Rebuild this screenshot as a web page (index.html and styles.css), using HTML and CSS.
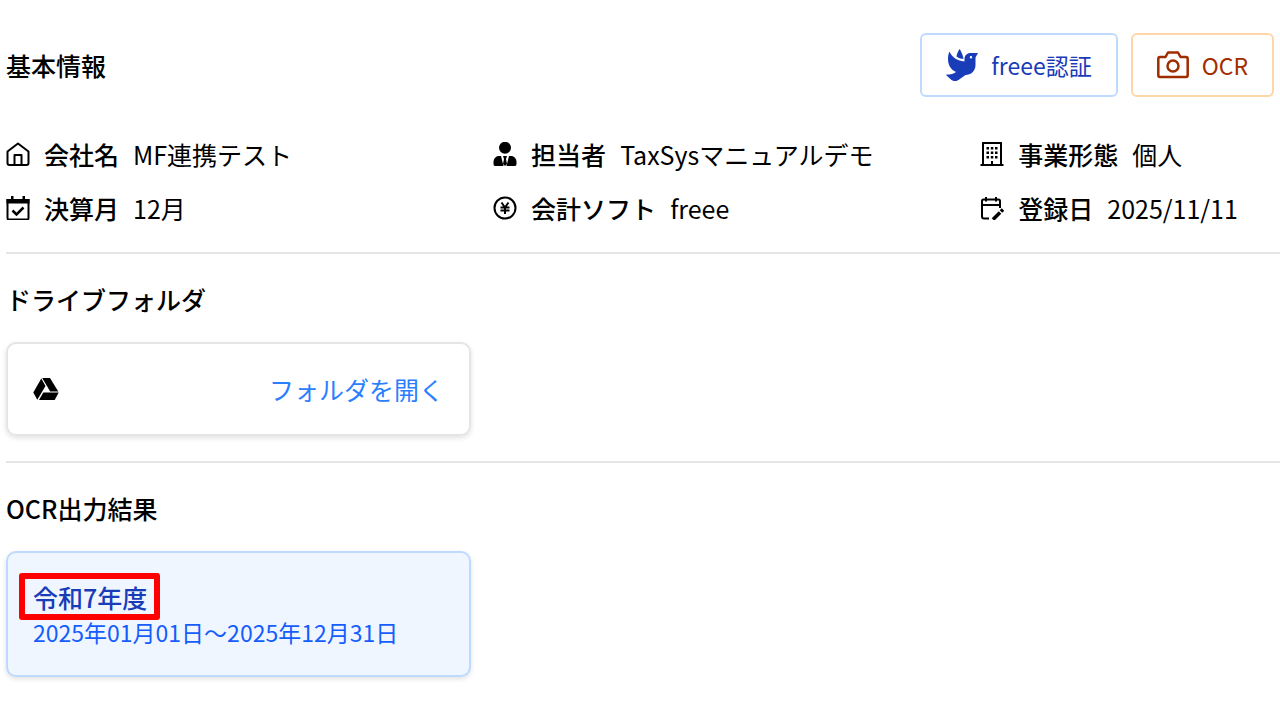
FILE: index.html
```html
<!DOCTYPE html>
<html lang="ja">
<head>
<meta charset="utf-8">
<meta name="viewport" content="width=device-width, initial-scale=1">
<title>基本情報</title>
<link rel="stylesheet" href="styles.css">
</head>
<body>
<main class="page">

<section class="section">
  <div class="section-head">
    <h2>基本情報</h2>
    <div class="actions">
      <button type="button" class="btn btn-blue">
        <svg class="btn-icon" viewBox="0 0 32 32" fill="currentColor" aria-hidden="true">
          <path d="M10.500 7.500C11 4.500 12 2 13.800 0C15.500 3.500 17 6 17.500 9.800C14.500 9.800 12.500 9 10.500 7.500Z"/>
          <path fill-rule="evenodd" d="M3.500 2.500C5.500 7.500 10 11.500 18.500 12.500V10C18.500 6.500 21 4 24.500 4H32L29.500 8.500V16C29.500 22 25 26 19.500 26L12.500 31C10.500 32.500 7.500 32.500 5.500 31L0.500 26.500C0 26 0.300 25.500 1 25.500C4.500 25.500 7.500 25 10 23C5 21 2 16 2 10C2 7.500 2.300 5 3.500 2.500ZM25 7A1.200 1.200 0 1 0 25 9.400A1.200 1.200 0 1 0 25 7Z"/>
        </svg>
        freee認証
      </button>
      <button type="button" class="btn btn-orange">
        <svg class="btn-icon" viewBox="0 0 32 32" fill="none" stroke="currentColor" stroke-width="2.500" stroke-linejoin="round" aria-hidden="true">
          <path d="M3 8H8.500L11 3.500H21L23.500 8H29Q30.700 8 30.700 10V26Q30.700 28 29 28H3Q1.300 28 1.300 26V10Q1.300 8 3 8Z"/>
          <circle cx="16" cy="17" r="5.500"/>
        </svg>
        OCR
      </button>
    </div>
  </div>

  <dl class="info">
    <div class="info-item">
      <svg class="info-icon" viewBox="0 0 24 24" fill="none" stroke="currentColor" stroke-width="2" stroke-linejoin="round" aria-hidden="true">
        <path d="M1.500 9.500L12 1.500L22.500 9.500V21Q22.500 23 20.500 23H3.500Q1.500 23 1.500 21Z"/>
        <path d="M8.500 23V13H15.500V23"/>
      </svg>
      <dt>会社名</dt><dd>MF連携テスト</dd>
    </div>
    <div class="info-item">
      <svg class="info-icon" viewBox="0 0 24 24" fill="currentColor" aria-hidden="true">
        <circle cx="12" cy="5.800" r="6"/>
        <path d="M5 14H8L10.500 24H2Q0.500 24 0.500 22V19.500Q1 15 5 14ZM19 14H16L13.500 24H22Q23.500 24 23.500 22V19.500Q23 15 19 14Z"/>
        <path d="M10 14H14L13 17L14 22L12 24L10 22L11 17Z"/>
      </svg>
      <dt>担当者</dt><dd>TaxSysマニュアルデモ</dd>
    </div>
    <div class="info-item">
      <svg class="info-icon" viewBox="0 0 24 24" aria-hidden="true">
        <path d="M3 23V1H21V23M0.500 23H23.500M12 19V23" fill="none" stroke="currentColor" stroke-width="2"/>
        <path d="M6.500 5h2.500v2.500h-2.500zM10.800 5h2.500v2.500h-2.500zM15 5h2.500v2.500h-2.500zM6.500 9.500h2.500v2.500h-2.500zM10.800 9.500h2.500v2.500h-2.500zM15 9.500h2.500v2.500h-2.500zM6.500 14h2.500v2.500h-2.500zM10.800 14h2.500v2.500h-2.500zM15 14h2.500v2.500h-2.500z" fill="currentColor"/>
      </svg>
      <dt>事業形態</dt><dd>個人</dd>
    </div>
    <div class="info-item">
      <svg class="info-icon" viewBox="0 0 24 24" aria-hidden="true">
        <path d="M1.500 4H22.500V22Q22.500 23.500 21 23.500H3Q1.500 23.500 1.500 22Z" fill="none" stroke="currentColor" stroke-width="2"/>
        <path d="M0.500 3H5V0H7.500V3H16.500V0H19V3H23.500V7.500H0.500Z" fill="currentColor"/>
        <path d="M6.500 14.500L10.500 18.500L17.500 11.500" fill="none" stroke="currentColor" stroke-width="2.500"/>
      </svg>
      <dt>決算月</dt><dd>12月</dd>
    </div>
    <div class="info-item">
      <svg class="info-icon" viewBox="0 0 24 24" fill="none" stroke="currentColor" stroke-width="2" aria-hidden="true">
        <circle cx="12" cy="12" r="10.500"/>
        <path d="M8.500 6.500L12 11.500L15.500 6.500M7.500 11.500H16.500M7.500 14.500H16.500M12 11.500V18"/>
      </svg>
      <dt>会計ソフト</dt><dd>freee</dd>
    </div>
    <div class="info-item">
      <svg class="info-icon" viewBox="0 0 24 24" fill="none" stroke="currentColor" stroke-width="2" aria-hidden="true">
        <path d="M9 22.500H4Q2 22.500 2 20.500V5Q2 3.500 3.500 3.500H18.500Q20 3.500 20 5V12M2 9H20M6 1V5.500M16 1V5.500"/>
        <path d="M13 23.500L20 16.500" stroke-width="3.500"/>
        <path d="M21 15.500L23 13.500" stroke-width="3.500"/>
      </svg>
      <dt>登録日</dt><dd>2025/11/11</dd>
    </div>
  </dl>
</section>

<section class="section">
  <h2>ドライブフォルダ</h2>
  <div class="card drive">
    <svg class="drive-icon" viewBox="0 0 26 24" fill="currentColor" aria-hidden="true">
      <path d="M8.300 1.500L12.500 9L4.300 22.800L0.300 15.500Z"/>
      <path d="M9.200 1H17L25.300 14.500H17.200Z"/>
      <path d="M10.300 15.500H25.700L21.700 23H6Z"/>
    </svg>
    <a href="#" class="drive-link">フォルダを開く</a>
  </div>
</section>

<section class="section">
  <h2>OCR出力結果</h2>
  <a href="#" class="card result">
    <span class="result-year">令和7年度</span>
    <span class="result-term">2025年01月01日～2025年12月31日</span>
  </a>
</section>

</main>
</body>
</html>
```
FILE: styles.css
```css
* {
  box-sizing: border-box;
}

body {
  margin: 0;
  background: #fff;
  color: #000;
  font-family: "Noto Sans CJK JP", "Noto Sans", sans-serif;
  font-size: 25px;
  line-height: 38px;
}

h2, dl, dd {
  margin: 0;
}

h2 {
  font-size: 25px;
  font-weight: 500;
}

.page {
  padding: 33px 0 32px 6px;
}

.section + .section {
  margin-top: 25px;
  padding-top: 26px;
  border-top: 2px solid #e5e5e5;
}

.section-head {
  display: flex;
  align-items: center;
  justify-content: space-between;
  margin-right: 6px;
}

.actions {
  display: flex;
  gap: 13px;
}

.btn {
  display: flex;
  align-items: center;
  gap: 13px;
  height: 64px;
  padding: 0 24px;
  border: 2px solid;
  border-radius: 6px;
  background: #fff;
  font-family: inherit;
  font-size: 23px;
}

.btn-blue {
  border-color: #bedbff;
  color: #193cb8;
}

.btn-orange {
  border-color: #ffd6a7;
  color: #9f2d00;
}

.btn-icon {
  width: 32px;
  height: 32px;
}

/* info list */
.info {
  display: grid;
  grid-template-columns: 13fr 13fr 8fr;
  row-gap: 16px;
  margin-top: 38px;
}

.info-item {
  display: flex;
  align-items: center;
  white-space: nowrap;
}

.info-icon {
  width: 24px;
  height: 24px;
  margin-right: 14px;
}

dt {
  margin-right: 14px;
  font-weight: 500;
}

/* cards */
.card {
  display: flex;
  width: 465px;
  max-width: 100%;
  margin-top: 24px;
  border: 2px solid #e5e5e5;
  border-radius: 10px;
  box-shadow: 0 2px 5px rgba(0, 0, 0, 0.12);
  text-decoration: none;
}

.drive {
  align-items: center;
  justify-content: space-between;
  padding: 26px 25px;
}

.drive-icon {
  width: 26px;
  height: 24px;
}

.drive-link {
  color: #2b7fff;
  text-decoration: none;
}

.result {
  flex-direction: column;
  align-items: flex-start;
  padding: 26px 25px;
  border-color: #bedbff;
  background: #eff6ff;
}

.result-year {
  position: relative;
  color: #193cb8;
  font-weight: 500;
  line-height: 36px;
}

.result-year::after {
  content: "";
  position: absolute;
  inset: -6px -13px -5px -14px;
  border: 6px solid #f00;
  border-radius: 3px;
}

.result-term {
  color: #155dfc;
  font-size: 23px;
  line-height: 34px;
}
```
